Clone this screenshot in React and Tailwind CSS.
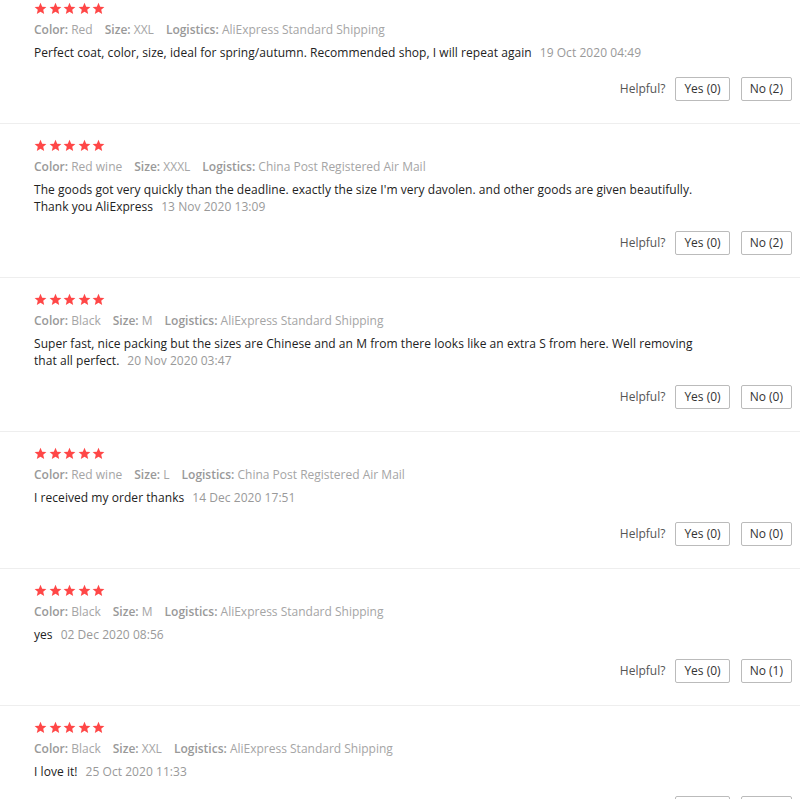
import React from 'react';

const reviews = [
  {
    color: 'Red',
    size: 'XXL',
    logistics: 'AliExpress Standard Shipping',
    text: 'Perfect coat, color, size, ideal for spring/autumn. Recommended shop, I will repeat again',
    date: '19 Oct 2020 04:49',
    yes: 0,
    no: 2,
  },
  {
    color: 'Red wine',
    size: 'XXXL',
    logistics: 'China Post Registered Air Mail',
    text: "The goods got very quickly than the deadline. exactly the size I'm very davolen. and other goods are given beautifully. Thank you AliExpress",
    date: '13 Nov 2020 13:09',
    yes: 0,
    no: 2,
  },
  {
    color: 'Black',
    size: 'M',
    logistics: 'AliExpress Standard Shipping',
    text: 'Super fast, nice packing but the sizes are Chinese and an M from there looks like an extra S from here. Well removing that all perfect.',
    date: '20 Nov 2020 03:47',
    yes: 0,
    no: 0,
  },
  {
    color: 'Red wine',
    size: 'L',
    logistics: 'China Post Registered Air Mail',
    text: 'I received my order thanks',
    date: '14 Dec 2020 17:51',
    yes: 0,
    no: 0,
  },
  {
    color: 'Black',
    size: 'M',
    logistics: 'AliExpress Standard Shipping',
    text: 'yes',
    date: '02 Dec 2020 08:56',
    yes: 0,
    no: 1,
  },
  {
    color: 'Black',
    size: 'XXL',
    logistics: 'AliExpress Standard Shipping',
    text: 'I love it!',
    date: '25 Oct 2020 11:33',
    yes: 0,
    no: 0,
  },
];

function Star() {
  return (
    <svg width="13" height="13" viewBox="0 0 24 24">
      <path
        d="M12 1.5l3.1 7.2 7.8.6-5.9 5.1 1.8 7.6L12 17.9 5.2 22l1.8-7.6L1.1 9.3l7.8-.6z"
        fill="#ff4747"
      />
    </svg>
  );
}

function Meta({ label, value }) {
  return (
    <span className="mr-3">
      <span className="font-semibold text-[#999]">{label}:</span>{' '}
      <span className="text-[#a5a5a5]">{value}</span>
    </span>
  );
}

function Review({ r }) {
  return (
    <div className="border-t border-[#eee] pt-[14px] pb-[22px] pl-[34px] pr-2">
      {/* rating */}
      <div className="flex gap-[1.5px] h-[14px] items-center">
        {[0, 1, 2, 3, 4].map((i) => (
          <Star key={i} />
        ))}
      </div>

      <div className="mt-[5px] text-[12px] leading-[20px]">
        <Meta label="Color" value={r.color} />
        <Meta label="Size" value={r.size} />
        <Meta label="Logistics" value={r.logistics} />
      </div>

      <div className="mt-1 text-[12px] leading-[17px] text-[#222] tracking-[0.05px] max-w-[670px]">
        {r.text}
        <span className="ml-2 text-[#999]">{r.date}</span>
      </div>

      <div className="mt-4 flex items-center justify-end text-[12px] text-[#333]">
        <span className="mr-[10px] text-[#555]">Helpful?</span>
        <button className="h-6 px-2 border border-[#bbb] rounded-[2px] bg-white">
          Yes ({r.yes})
        </button>
        <button className="ml-[11px] h-6 px-2 border border-[#bbb] rounded-[2px] bg-white">
          No ({r.no})
        </button>
      </div>
    </div>
  );
}

export default function App() {
  return (
    <div
      className="w-[800px] h-[799px] overflow-hidden bg-white"
      style={{ fontFamily: '"Open Sans", sans-serif' }}
    >
      <div className="-mt-[14px]">
        {reviews.map((r, i) => (
          <Review key={i} r={r} />
        ))}
      </div>
    </div>
  );
}
